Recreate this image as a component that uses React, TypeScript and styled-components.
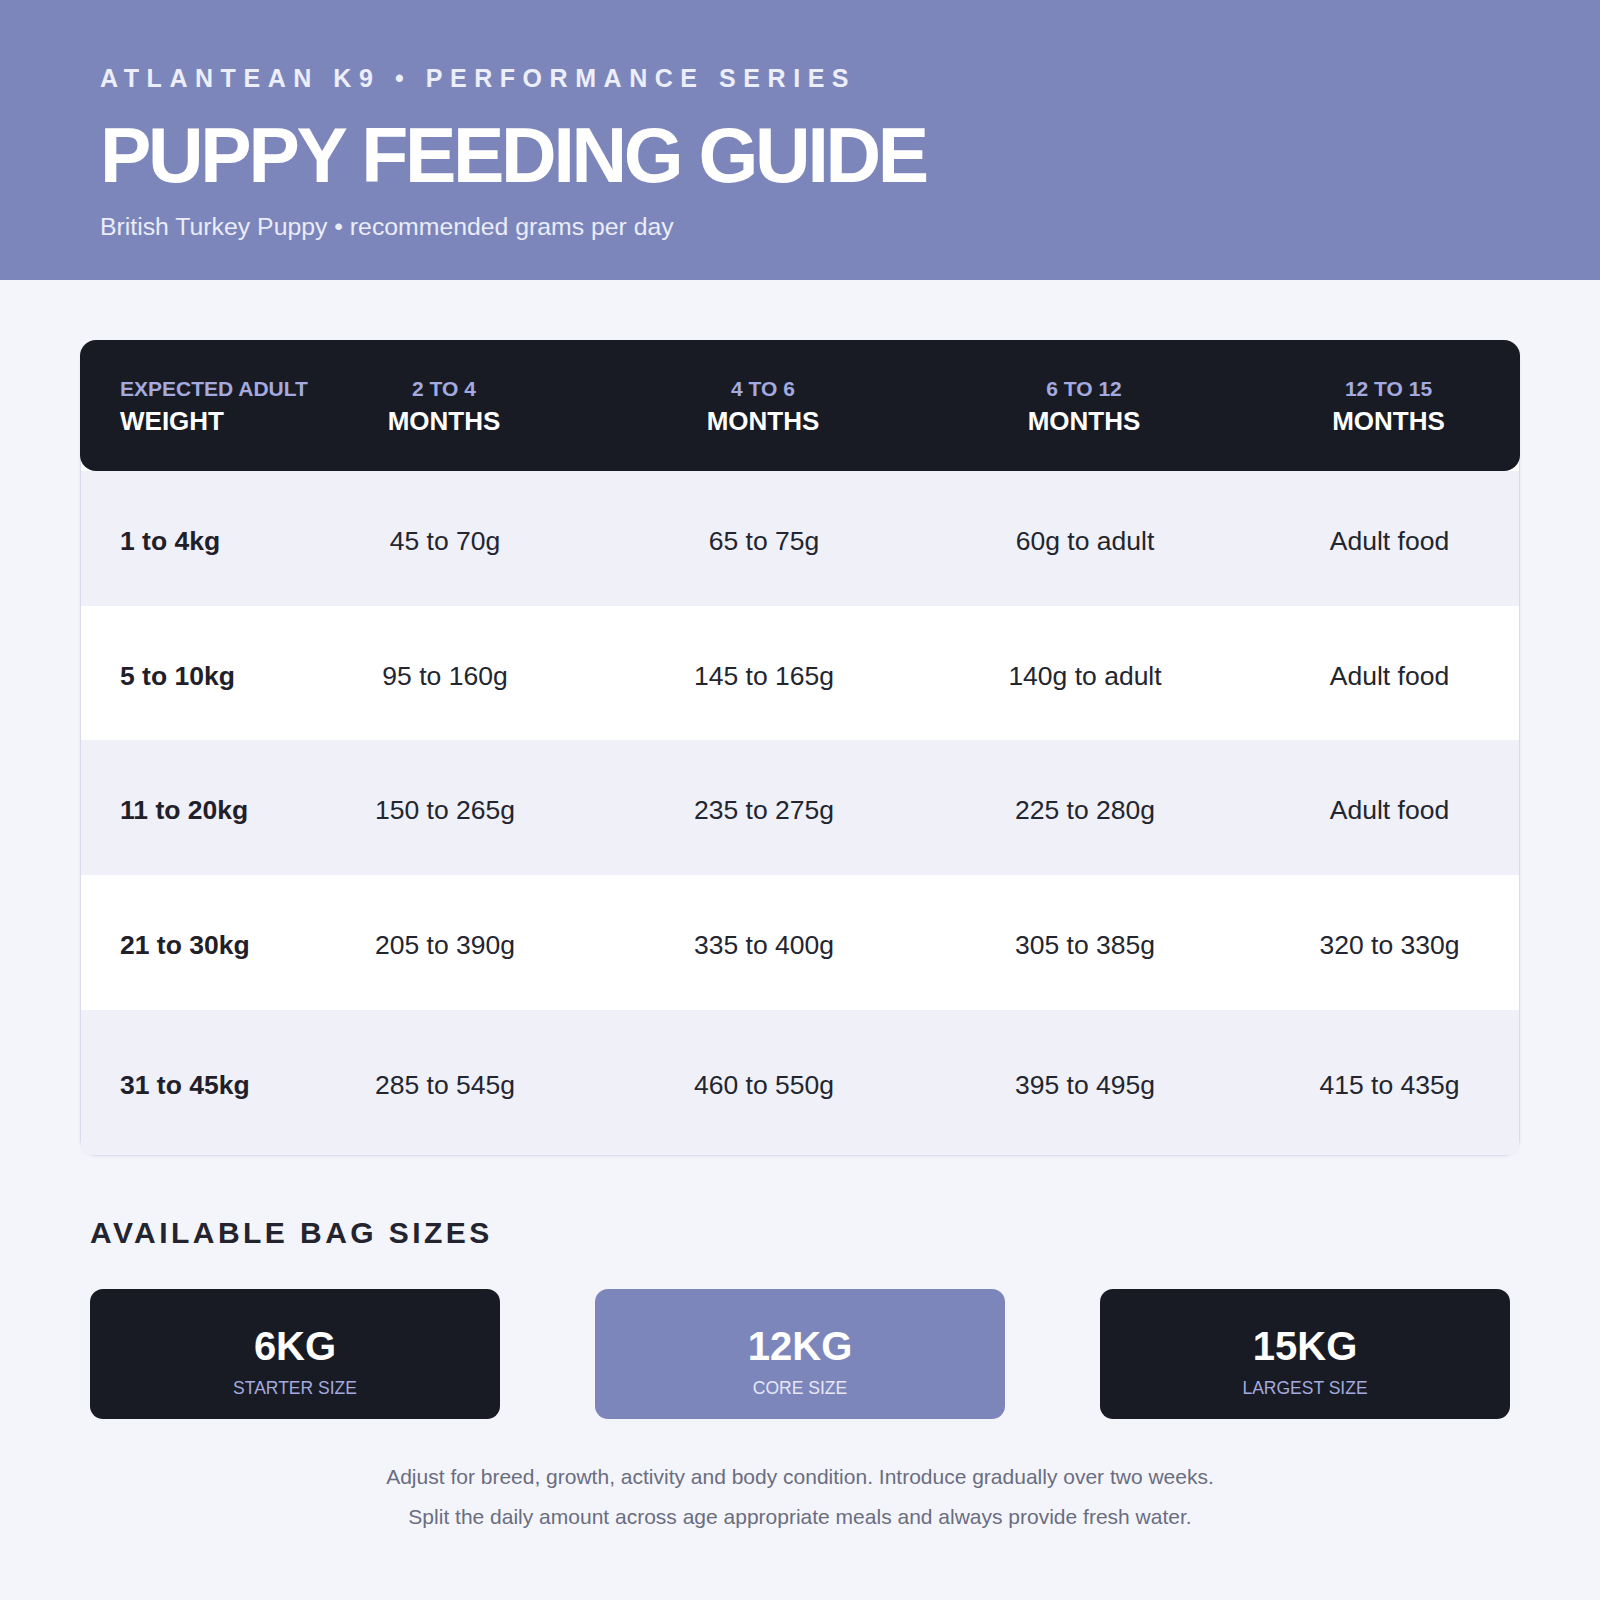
import React from "react";
import styled, { createGlobalStyle } from "styled-components";

const Global = createGlobalStyle`
  html, body { margin: 0; padding: 0; }
  body {
    background: #f4f5fa;
    font-family: "Liberation Sans", Arial, Helvetica, sans-serif;
    color: #1f2029;
  }
  * { box-sizing: border-box; }
`;

const Page = styled.div`
  width: 1600px;
  min-height: 1600px;
  background: #f4f5fa;
`;

const Hero = styled.header`
  height: 280px;
  background: #7c86bb;
  padding: 66px 100px 0;
`;

const Kicker = styled.div`
  font-size: 25px;
  line-height: 25px;
  font-weight: 700;
  letter-spacing: 7.55px;
  white-space: nowrap;
  color: #eceefa;
`;

const Title = styled.h1`
  margin: 26px 0 0;
  font-size: 77px;
  line-height: 77px;
  font-weight: 700;
  letter-spacing: -3.3px;
  white-space: nowrap;
  color: #ffffff;
`;

const Subtitle = styled.div`
  margin-top: 20px;
  font-size: 24.8px;
  line-height: 25px;
  color: #eaecf8;
`;

const Main = styled.main`
  padding: 60px 80px 0;
`;

const Card = styled.div`
  border: 1px solid #d9dcec;
  border-radius: 16px;
  background: #ffffff;
  box-shadow: 0 1px 3px rgba(40, 44, 80, 0.06);
`;

const cols = "191px 346px 292px 350px 259px";

const HeadRow = styled.div`
  display: grid;
  grid-template-columns: ${cols};
  height: 131px;
  margin: -1px -1px 0;
  background: #191b24;
  border-radius: 16px;
  align-items: center;
`;

const HeadCell = styled.div<{ $left?: boolean }>`
  display: flex;
  flex-direction: column;
  align-items: ${(p) => (p.$left ? "flex-start" : "center")};
  padding-left: ${(p) => (p.$left ? "40px" : "0")};
  gap: 9px;
  white-space: nowrap;
`;

const HeadTop = styled.span`
  font-size: 21px;
  line-height: 21px;
  font-weight: 700;
  color: #a3aadf;
`;

const HeadBottom = styled.span`
  font-size: 26px;
  line-height: 26px;
  font-weight: 700;
  color: #ffffff;
`;

const Row = styled.div<{ $tint: boolean; $tall?: boolean }>`
  display: grid;
  grid-template-columns: ${cols};
  height: ${(p) => (p.$tall ? "145px" : "134.7px")};
  padding-top: 6px;
  background: ${(p) => (p.$tint ? "#eff0f8" : "#ffffff")};
  align-items: center;
`;

const WeightCell = styled.div`
  padding-left: 39px;
  font-size: 26.5px;
  font-weight: 700;
  white-space: nowrap;
  color: #1f2029;
`;

const ValueCell = styled.div`
  text-align: center;
  font-size: 26.5px;
  white-space: nowrap;
  color: #23252f;
`;

const Bags = styled.section`
  padding: 0 90px;
  margin-top: 62px;
`;

const BagsTitle = styled.h2`
  margin: 0;
  font-size: 30px;
  line-height: 30px;
  font-weight: 700;
  letter-spacing: 3.45px;
  color: #23242f;
`;

const BagGrid = styled.div`
  display: grid;
  grid-template-columns: repeat(3, 410px);
  gap: 95px;
  margin-top: 41px;
`;

const Bag = styled.div<{ $accent?: boolean }>`
  height: 130px;
  border-radius: 13px;
  background: ${(p) => (p.$accent ? "#7c86bb" : "#191b24")};
  display: flex;
  flex-direction: column;
  align-items: center;
  padding-top: 37px;
`;

const BagWeight = styled.div`
  font-size: 40px;
  line-height: 40px;
  font-weight: 700;
  color: #ffffff;
`;

const BagLabel = styled.div<{ $accent?: boolean }>`
  margin-top: 13px;
  font-size: 17.5px;
  line-height: 18px;
  color: ${(p) => (p.$accent ? "#e6e8f7" : "#a3aadf")};
`;

const Notes = styled.footer`
  margin-top: 38px;
  text-align: center;
  font-size: 21px;
  line-height: 40px;
  color: #6a6d80;
`;

const heads = [
  ["EXPECTED ADULT", "WEIGHT"],
  ["2 TO 4", "MONTHS"],
  ["4 TO 6", "MONTHS"],
  ["6 TO 12", "MONTHS"],
  ["12 TO 15", "MONTHS"],
];

const rows = [
  ["1 to 4kg", "45 to 70g", "65 to 75g", "60g to adult", "Adult food"],
  ["5 to 10kg", "95 to 160g", "145 to 165g", "140g to adult", "Adult food"],
  ["11 to 20kg", "150 to 265g", "235 to 275g", "225 to 280g", "Adult food"],
  ["21 to 30kg", "205 to 390g", "335 to 400g", "305 to 385g", "320 to 330g"],
  ["31 to 45kg", "285 to 545g", "460 to 550g", "395 to 495g", "415 to 435g"],
];

const bags = [
  { w: "6KG", l: "STARTER SIZE", accent: false },
  { w: "12KG", l: "CORE SIZE", accent: true },
  { w: "15KG", l: "LARGEST SIZE", accent: false },
];

export default function App() {
  return (
    <Page>
      <Global />
      <Hero>
        <Kicker>ATLANTEAN K9 • PERFORMANCE SERIES</Kicker>
        <Title>PUPPY FEEDING GUIDE</Title>
        <Subtitle>British Turkey Puppy • recommended grams per day</Subtitle>
      </Hero>
      <Main>
        <Card>
          <HeadRow>
            {heads.map(([t, b], i) => (
              <HeadCell key={i} $left={i === 0}>
                <HeadTop>{t}</HeadTop>
                <HeadBottom>{b}</HeadBottom>
              </HeadCell>
            ))}
          </HeadRow>
          {rows.map((r, i) => (
            <Row key={i} $tint={i % 2 === 0} $tall={i === rows.length - 1}>
              <WeightCell>{r[0]}</WeightCell>
              {r.slice(1).map((v, j) => (
                <ValueCell key={j}>{v}</ValueCell>
              ))}
            </Row>
          ))}
        </Card>
      </Main>
      <Bags>
        <BagsTitle>AVAILABLE BAG SIZES</BagsTitle>
        <BagGrid>
          {bags.map((b) => (
            <Bag key={b.w} $accent={b.accent}>
              <BagWeight>{b.w}</BagWeight>
              <BagLabel $accent={b.accent}>{b.l}</BagLabel>
            </Bag>
          ))}
        </BagGrid>
      </Bags>
      <Notes>
        Adjust for breed, growth, activity and body condition. Introduce gradually over two weeks.
        <br />
        Split the daily amount across age appropriate meals and always provide fresh water.
      </Notes>
    </Page>
  );
}
